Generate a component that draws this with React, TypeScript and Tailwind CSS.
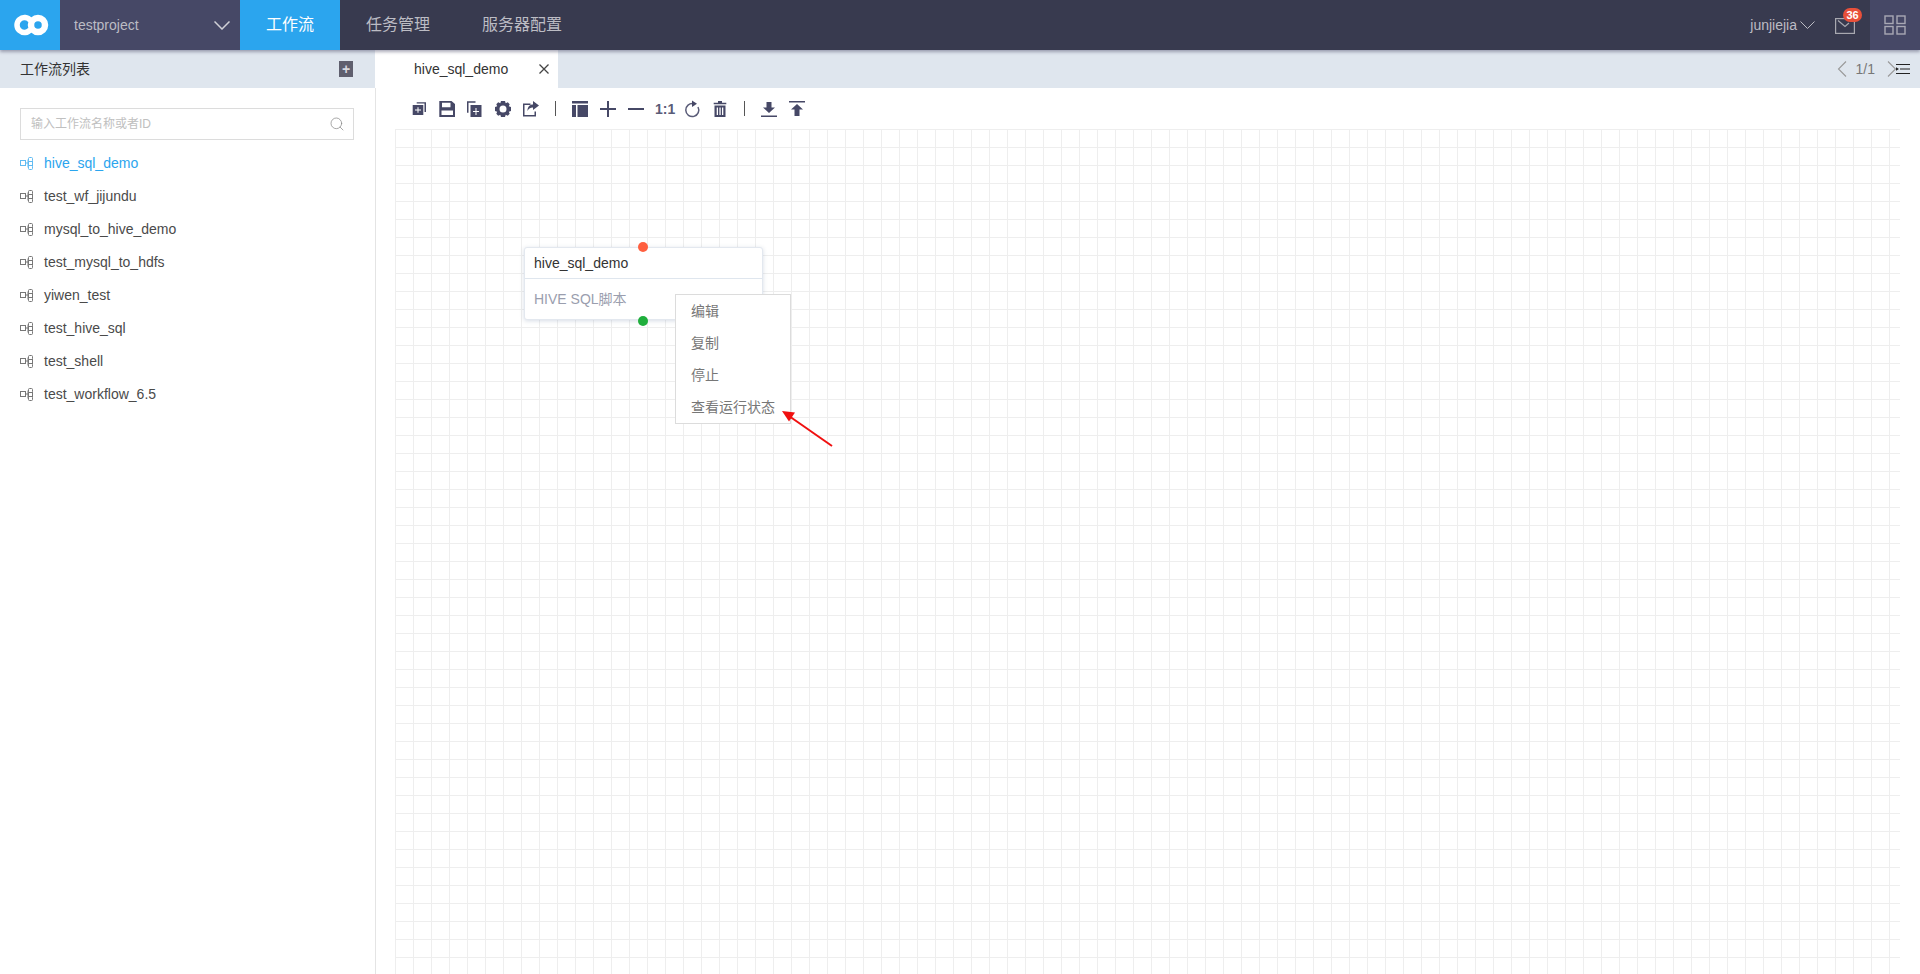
import { Search } from "lucide-react";

const flows = ["hive_sql_demo", "test_wf_jijundu", "mysql_to_hive_demo", "test_mysql_to_hdfs", "yiwen_test", "test_hive_sql", "test_shell", "test_workflow_6.5"];
const menu = ["编辑", "复制", "停止", "查看运行状态"];

function FlowIcon() {
  return (
    <svg width="13" height="13" viewBox="0 0 13 13" fill="none" stroke="currentColor" strokeWidth="1" opacity="0.75" className="shrink-0">
      <rect x="0.5" y="3.5" width="5" height="5" />
      <path d="M5.500 6h2.500M8 2.500v8" />
      <rect x="8.500" y="0.500" width="4" height="4" rx="1" />
      <rect x="8.500" y="4.500" width="4" height="4" />
      <rect x="8.500" y="8.500" width="4" height="4" rx="1" />
    </svg>
  );
}

function Tool({ children }: { children: React.ReactNode }) {
  return (
    <svg width="18" height="18" viewBox="0 0 18 18" className="shrink-0" fill="#464866">
      {children}
    </svg>
  );
}

function Sep() {
  return <div className="w-px h-[15px] mx-[5px] bg-[#555]" />;
}

export default function App() {
  return (
    <div className="h-[974px] w-[1920px] overflow-hidden flex flex-col bg-white font-['Liberation_Sans','Noto_Sans_CJK_SC',sans-serif] text-[14px]">
      {/* top bar */}
      <header className="h-[50px] shrink-0 flex items-stretch bg-[#383a4f] shadow-[0_2px_3px_rgba(70,72,102,0.45)] relative z-10 text-[#bcbcc4]">
        <div className="w-[60px] bg-[#2ba5ee] flex items-center justify-center">
          <svg width="36" height="22" viewBox="0 0 36 22" fill="none" stroke="#fff" className="ml-[2px]">
            <path d="M17.500 6.500A7.500 7.500 0 1 0 17.500 15.500" strokeWidth="5.500" />
            <circle cx="25" cy="11" r="7" strokeWidth="6.500" />
          </svg>
        </div>
        <div className="w-[180px] bg-[#464866] flex items-center justify-between pl-[14px] pr-[10px]">
          <span>testproject</span>
          <svg width="16" height="9" viewBox="0 0 16 9" fill="none" stroke="#d0d0d6" strokeWidth="1.500">
            <path d="M0.500 0.500L8 8L15.500 0.500" />
          </svg>
        </div>
        <div className="w-[100px] bg-[#2ba5ee] text-white text-[16px] flex items-center justify-center">工作流</div>
        <div className="px-[26px] text-[16px] flex items-center">任务管理</div>
        <div className="px-[26px] text-[16px] flex items-center">服务器配置</div>
        <div className="ml-auto flex items-stretch">
          <div className="flex items-center gap-[3px]">
            <span>junjiejia</span>
            <svg width="15" height="8" viewBox="0 0 15 8" fill="none" stroke="#bcbcc4" strokeWidth="1">
              <path d="M0.500 0.500L7.500 7.500L14.500 0.500" />
            </svg>
          </div>
          <div className="relative w-[55px] flex items-center pl-[20px]">
            <svg width="20" height="16" viewBox="0 0 20 16" fill="none" stroke="#a8a8b0" strokeWidth="1.200" className="mt-[1px]">
              <rect x="0.600" y="0.600" width="18.800" height="14.800" />
              <path d="M3 2.500L10 8.500L14 5" />
            </svg>
            <span className="absolute left-[28px] top-[8px] w-[19px] h-[14px] rounded-full bg-[#e8503a] text-white text-[11px] font-bold leading-[14px] text-center">36</span>
          </div>
          <div className="w-[50px] bg-[#464866] flex items-center justify-center">
            <svg width="22" height="20" viewBox="0 0 22 20" fill="none" stroke="#a8a8b4" strokeWidth="1.400">
              <rect x="1" y="1" width="8" height="7.500" />
              <rect x="13" y="1" width="8" height="7.500" />
              <rect x="1" y="11.500" width="8" height="7.500" />
              <rect x="13" y="11.500" width="8" height="7.500" />
            </svg>
          </div>
        </div>
      </header>

      <div className="flex-1 flex min-h-0">
        {/* sidebar */}
        <aside className="w-[376px] shrink-0 border-r border-[#e4e4e4] flex flex-col">
          <div className="h-[38px] bg-[#dfe6ee] flex items-center justify-between pl-[20px] pr-[22px] text-[#333]">
            <span>工作流列表</span>
            <span className="w-[14px] h-[16px] bg-[#5f5f6e] flex items-center justify-center text-[#d8d8de] text-[14px] leading-none font-bold">+</span>
          </div>
          <div className="mt-[20px] mx-[20px] w-[334px] h-[32px] border border-[#dcdcdc] flex items-center justify-between pl-[10px] pr-[8px]">
            <span className="text-[12px] text-[#c0c0c0]">输入工作流名称或者ID</span>
            <Search size={16} strokeWidth={1.100} className="text-[#888]" />
          </div>
          <ul className="mt-[7px]">
            {flows.map((f, i) => (
              <li key={f} className={`h-[33px] flex items-center pl-[20px] gap-[11px] ${i === 0 ? "text-[#2ba5ee]" : "text-[#4a4a4a]"}`}>
                <FlowIcon />
                <span>{f}</span>
              </li>
            ))}
          </ul>
        </aside>

        {/* main */}
        <main className="flex-1 min-w-0 flex flex-col">
          <div className="h-[38px] shrink-0 bg-[#dfe6ee] flex items-stretch pr-[10px]">
            <div className="w-[183px] ml-[-1px] bg-white flex items-center justify-between pl-[39px] pr-[8px] text-[#333]">
              <span>hive_sql_demo</span>
              <svg width="12" height="12" viewBox="0 0 12 12" fill="none" stroke="#444" strokeWidth="1.300">
                <path d="M1.500 1.500L10.500 10.500M10.500 1.500L1.500 10.500" />
              </svg>
            </div>
            <div className="ml-auto flex items-center text-[#777]">
              <svg width="10" height="16" viewBox="0 0 10 16" fill="none" stroke="#999" strokeWidth="1.100">
                <path d="M9 0.500L1.500 8L9 15.500" />
              </svg>
              <span className="ml-[9px] mr-[12px]">1/1</span>
              <svg width="10" height="16" viewBox="0 0 10 16" fill="none" stroke="#999" strokeWidth="1.100" className="mr-[-1px]">
                <path d="M1 0.500L8.500 8L1 15.500" />
              </svg>
              <svg width="14" height="10" viewBox="0 0 14 10" stroke="#222" strokeWidth="1" fill="#222">
                <path d="M0 0.500h14M4 5h10M0 9.500h14" />
                <path d="M0 3.200l3 1.800-3 1.800z" stroke="none" />
              </svg>
            </div>
          </div>

          <div className="h-[41px] shrink-0 flex items-center pl-[34px] gap-[10px]">
            <Tool>
              <path d="M6.700 2.300H16V12h-1.500V3.500H6.700z" />
              <path d="M2.700 5h10.600v10H2.700zM7.500 7.200v2.300H5v1h2.500v2.300h1v-2.300H11v-1H8.500V7.200z" fillRule="evenodd" />
            </Tool>
            <Tool>
              <path d="M1.300 1H13.500L17 4v13H1.300zM4 2.800v4.500h8.500V2.800zM3.500 10.500v4.500h11.500v-4.500z" fillRule="evenodd" />
            </Tool>
            <Tool>
              <path d="M1 1.300h8.500v1.500H2.500v10H1z" />
              <path d="M4.500 5H15.500V17H4.500zM9.500 8v3H7v1h2.500v3h1v-3H13v-1h-2.500V8z" fillRule="evenodd" />
            </Tool>
            <Tool>
              <path d="M7 1h4l.7 2.200 2.100-.9 1.900 1.900-.9 2.100L17 7v4l-2.200.7.900 2.100-1.900 1.900-2.100-.9L11 17H7l-.7-2.200-2.100.9-1.900-1.900.9-2.100L1 11V7l2.200-.7-.9-2.100 1.900-1.900 2.100.9zM9 5.500a3.500 3.500 0 1 0 0 7 3.500 3.500 0 0 0 0-7z" fillRule="evenodd" />
            </Tool>
            <Tool>
              <path d="M1 3.500h7.500V5H2.500v10h10v-3.500H14V16.500H1z" />
              <path d="M11 1l6 4.500L11 10V7.500C8 7.500 6.500 9 5.500 11c0-4 2-6.500 5.500-6.500z" />
            </Tool>
            <Sep />
            <Tool>
              <path d="M1 1h16v2.500H1zM1 5h4v12H1zM6.500 5H17v12H6.500z" />
            </Tool>
            <Tool>
              <path d="M8 1h2v7h7v2h-7v7H8v-7H1V8h7z" />
            </Tool>
            <Tool>
              <path d="M1 8h16v2H1z" />
            </Tool>
            <span className="w-[18px] text-center text-[#5a5c78] text-[14px] font-bold leading-none">1:1</span>
            <Tool>
              <g fill="none" stroke="#5a5c78" strokeWidth="1.500">
                <path d="M10.500 3.700A6.500 6.500 0 1 0 15 7" />
              </g>
              <path d="M9 .500L14 3.800L9 7z" />
            </Tool>
            <Tool>
              <path d="M7 1h4v1.700h4.300v1.500H2.700V2.700H7zM3.500 5.500h11V17h-11zM5.700 7.500v7.500h1.300V7.500zM8.400 7.500v7.500h1.300V7.500zM11 7.500v7.500h1.300V7.500z" fillRule="evenodd" />
            </Tool>
            <Sep />
            <Tool>
              <path d="M6.500 2h5v5.500H15L9 13 3 7.500h3.500zM1 15.500h16V17H1z" />
            </Tool>
            <Tool>
              <path d="M1 1h16v1.500H1zM9 4l6 5.500h-3.500V16h-5V9.500H3z" />
            </Tool>
          </div>

          {/* canvas */}
          <div className="relative flex-1 ml-[19px] mr-[20px] bg-[linear-gradient(#eeeeee_1px,transparent_1px),linear-gradient(90deg,#eeeeee_1px,transparent_1px)] bg-[size:18px_18px]">
            <div className="absolute left-[129px] top-[118px] w-[239px] h-[73px] bg-white rounded-[3px] border border-[#e3e8ef] shadow-[0_1px_4px_rgba(120,140,170,0.3)]">
              <div className="h-[31px] border-b border-[#dfe6ee] flex items-center pl-[9px] text-[#333]">hive_sql_demo</div>
              <div className="h-[40px] flex items-center pl-[9px] text-[#9a9eae]">HIVE SQL脚本</div>
              <span className="absolute left-[113px] top-[-6px] w-[10px] h-[10px] rounded-full bg-[#ff5f3f]" />
              <span className="absolute left-[113px] bottom-[-7px] w-[10px] h-[10px] rounded-full bg-[#1fae3c]" />
            </div>
            <ul className="absolute left-[280px] top-[165px] w-[116px] border border-[#dcdcdc] bg-white text-[#777]">
              {menu.map((m) => (
                <li key={m} className="h-[32px] flex items-center pl-[15px]">{m}</li>
              ))}
            </ul>
            <svg className="absolute left-[380px] top-[275px]" width="65" height="50" viewBox="0 0 65 50">
              <path d="M57 42L14 12" stroke="#f01010" strokeWidth="2" />
              <path d="M7 7l13 1.500-6 9z" fill="#f01010" />
            </svg>
          </div>
        </main>
      </div>
    </div>
  );
}
